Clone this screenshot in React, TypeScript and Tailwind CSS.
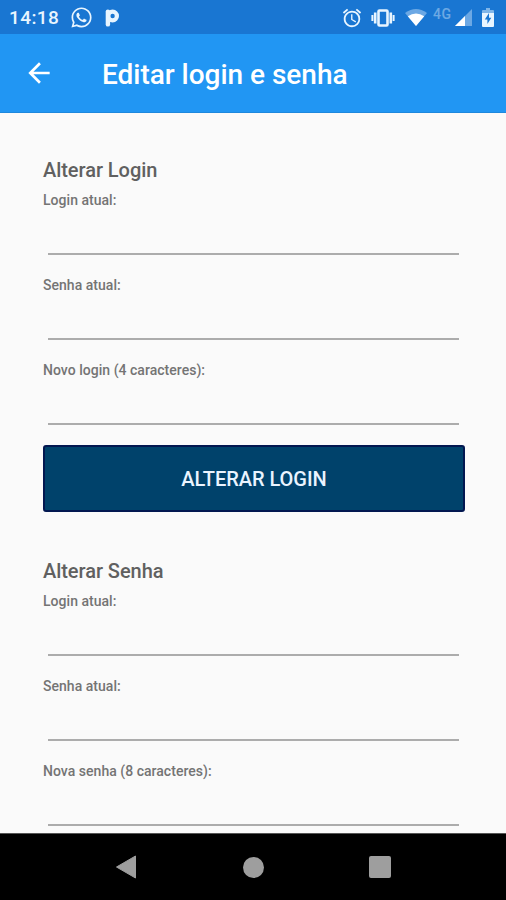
import type { ReactNode } from "react";
import { FaWhatsapp } from "react-icons/fa";
import { MdAlarm, MdArrowBack } from "react-icons/md";

function StatusBar() {
  return (
    <div className="flex h-[34px] items-center bg-[#1976d2] pt-px pr-[12px] pl-[9px] text-[#e8f5ff]">
      <span className="w-[61px] text-[19px] leading-none font-medium tracking-[0.4px] whitespace-nowrap">
        14:18
      </span>
      <FaWhatsapp size={23} />
      <svg width="16" height="20" viewBox="0 0 16 20" className="ml-[11px]">
        <circle cx="8.6" cy="8" r="4.3" fill="none" stroke="currentColor" strokeWidth="4.2" />
        <path d="M3.9 3.6V16.4" stroke="currentColor" strokeWidth="4.4" strokeLinecap="round" />
      </svg>

      <div className="ml-auto flex items-center">
        <MdAlarm size={22} />
        <svg width="24" height="18" viewBox="0 0 24 18" className="ml-[8px]">
          <rect x="7.5" y="1.5" width="9" height="15" rx="1" fill="none" stroke="currentColor" strokeWidth="2.6" />
          <path d="M4.2 3.5V14.5M19.8 3.5V14.5" stroke="currentColor" strokeWidth="2.6" />
          <path d="M1.4 6V12M22.6 6V12" stroke="currentColor" strokeWidth="2" />
        </svg>
        <svg width="22" height="17" viewBox="0 0 22 17" className="ml-[10px]">
          <path d="M0 4Q11-4 22 4L11 17Z" fill="currentColor" opacity="0.4" />
          <path d="M2.8 7.3Q11 1.8 19.2 7.3L11 17Z" fill="#fff" />
        </svg>
        <span className="mb-[7px] ml-[6px] w-[22px] text-[14px] leading-none font-medium tracking-[0.5px] opacity-40">
          4G
        </span>
        <svg width="17" height="17" viewBox="0 0 17 17">
          <path d="M17 0V17H0Z" fill="currentColor" opacity="0.4" />
          <path d="M10 7V17H0Z" fill="#fff" />
        </svg>
        <svg width="12" height="19" viewBox="0 0 12 19" className="ml-[10px]">
          <path d="M4 0H8V2H11Q12 2 12 3V6H0V3Q0 2 1 2H4Z" fill="currentColor" opacity="0.5" />
          <path d="M0 5H12V18Q12 19 11 19H1Q0 19 0 18Z" fill="currentColor" />
          <path d="M7 5L2.8 11.5H5.4V16L9.3 9.8H7Z" fill="#1976d2" />
        </svg>
      </div>
    </div>
  );
}

function Header() {
  return (
    <header className="flex h-[79px] items-center border-b border-[#1e88dd] bg-[#2196f3] text-white">
      <button className="ml-[23px] w-[79px]">
        <MdArrowBack size={32} />
      </button>
      <h1 className="pt-[4px] text-[28px] leading-none font-medium tracking-[-0.02px]">
        Editar login e senha
      </h1>
    </header>
  );
}

function Field({ label }: { label: string }) {
  return (
    <label className="block h-[85px]">
      <span className="block h-[20px] text-[14px] leading-[20px] font-medium tracking-[0.03px] text-[#747474]">
        {label}
      </span>
      <input className="mx-[5px] block h-[45px] w-[411px] border-b-2 border-[#acacac] bg-transparent outline-none" />
    </label>
  );
}

function Section({ title, children }: { title: string; children: ReactNode }) {
  return (
    <section>
      <h2 className="h-[35px] text-[20px] leading-[30px] font-medium tracking-[-0.05px] text-[#606060]">
        {title}
      </h2>
      {children}
    </section>
  );
}

function NavigationBar() {
  return (
    <nav className="flex h-[67px] items-center border-t border-[#555] bg-black pl-[116px] text-[#9e9e9e]">
      <svg width="20" height="24" viewBox="0 0 20 24">
        <path d="M19.5 1V23L.5 12Z" fill="currentColor" stroke="currentColor" strokeLinejoin="round" />
      </svg>
      <div className="ml-[107px] size-[21px] rounded-full bg-current" />
      <div className="ml-[105px] size-[22px] rounded-[2px] bg-current" />
    </nav>
  );
}

export default function App() {
  return (
    <div className="flex h-[900px] w-[506px] flex-col overflow-hidden bg-[#fafafa] font-['Roboto',sans-serif]">
      <StatusBar />
      <Header />
      <main className="h-[720px] overflow-hidden pt-[42px] pr-[41px] pl-[43px]">
        <Section title="Alterar Login">
          <Field label="Login atual:" />
          <Field label="Senha atual:" />
          <Field label="Novo login (4 caracteres):" />
        </Section>
        <button className="mb-[44px] block h-[67px] w-full rounded-[3px] border-2 border-[#021750] bg-[#00426b] text-[20px] font-medium tracking-[-0.05px] text-[#eaf4ff]">
          ALTERAR LOGIN
        </button>
        <Section title="Alterar Senha">
          <Field label="Login atual:" />
          <Field label="Senha atual:" />
          <Field label="Nova senha (8 caracteres):" />
        </Section>
      </main>
      <NavigationBar />
    </div>
  );
}
